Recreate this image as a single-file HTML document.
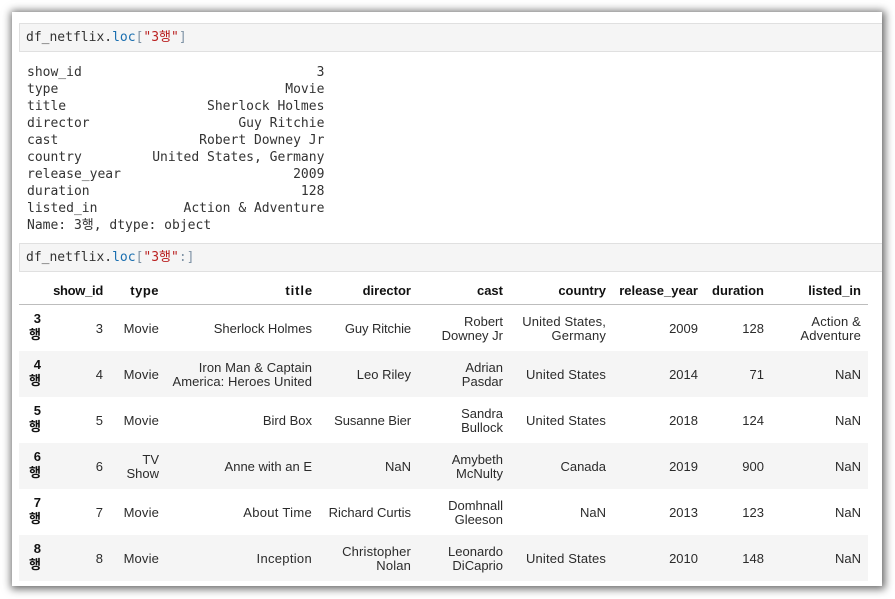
<!DOCTYPE html>
<html><head><meta charset="utf-8">
<style>
html,body{margin:0;padding:0;width:895px;height:599px;overflow:hidden;background:#fff}
#win{position:absolute;left:12px;top:12px;width:870px;height:574px;background:#fff;box-shadow:1px 1px 8px 2px rgba(0,0,0,.6)}
.in{position:absolute;left:19px;top:23px;width:862px;height:27px;background:#f5f5f5;border:1px solid #e0e0e0;border-right:0;box-sizing:content-box}
.code,pre{font-family:"DejaVu Sans Mono","Liberation Mono","Noto Sans CJK KR",monospace;font-size:13px;line-height:17px;margin:0;color:#333;position:absolute;white-space:pre}
.code{left:26px}
.p{color:#1a6fb0}.o{color:#7f93a5}.s{color:#ba2121}
pre{left:27px;top:64px}
table{position:absolute;left:19px;top:277px;width:849px;border-collapse:collapse;table-layout:fixed;font-family:"Liberation Sans","Noto Sans CJK KR",sans-serif;font-size:13px;line-height:14px;color:#2b2b2b}
th,td{padding:2px 7px 0 0;text-align:right;vertical-align:middle;font-weight:normal;overflow:visible;white-space:nowrap}
thead th{font-weight:bold;height:27px;padding:0 7px 0 0;border-bottom:1px solid #bdbdbd;color:#111}
thead th.h3{padding-right:6px}
tbody tr{height:46px}
tbody tr:nth-child(even){background:#f5f5f5}
tbody th{font-weight:bold;text-align:right;color:#111;line-height:16px;padding:0 7px 0 0}
tbody th span{position:relative;top:-1px;display:block}
.a{letter-spacing:.15px}.b{letter-spacing:.3px}.c{letter-spacing:-.1px}.d{letter-spacing:.07px}
.h1{letter-spacing:-.3px}.h2{letter-spacing:.5px}.h3{letter-spacing:.9px}
</style></head><body>
<div id="win"></div>
<div class="in" style="top:23px"></div>
<div class="code" style="top:29px">df_netflix.<span class="p">loc</span><span class="o">[</span><span class="s">"3행"</span><span class="o">]</span></div>
<pre>show_id                              3
type                             Movie
title                  Sherlock Holmes
director                   Guy Ritchie
cast                  Robert Downey Jr
country         United States, Germany
release_year                      2009
duration                           128
listed_in           Action &amp; Adventure
Name: 3행, dtype: object</pre>
<div class="in" style="top:243px"></div>
<div class="code" style="top:249px">df_netflix.<span class="p">loc</span><span class="o">[</span><span class="s">"3행"</span><span class="o">:]</span></div>
<table>
<colgroup><col style="width:29px"><col style="width:62px"><col style="width:56px"><col style="width:153px"><col style="width:99px"><col style="width:92px"><col style="width:103px"><col style="width:92px"><col style="width:66px"><col style="width:97px"></colgroup>
<thead><tr><th></th><th class="h1">show_id</th><th class="h2">type</th><th class="h3">title</th><th>director</th><th>cast</th><th>country</th><th>release_year</th><th>duration</th><th>listed_in</th></tr></thead>
<tbody>
<tr><th><span>3<br>행</span></th><td>3</td><td class="a">Movie</td><td>Sherlock Holmes</td><td class="c">Guy Ritchie</td><td>Robert<br>Downey Jr</td><td class="a">United States,<br>Germany</td><td>2009</td><td>128</td><td class="a">Action &amp;<br>Adventure</td></tr>
<tr><th><span>4<br>행</span></th><td>4</td><td class="a">Movie</td><td class="d">Iron Man &amp; Captain<br>America: Heroes United</td><td>Leo Riley</td><td>Adrian<br>Pasdar</td><td class="a">United States</td><td>2014</td><td>71</td><td>NaN</td></tr>
<tr><th><span>5<br>행</span></th><td>5</td><td class="a">Movie</td><td>Bird Box</td><td class="c">Susanne Bier</td><td>Sandra<br>Bullock</td><td class="a">United States</td><td>2018</td><td>124</td><td>NaN</td></tr>
<tr><th><span>6<br>행</span></th><td>6</td><td>TV<br>Show</td><td>Anne with an E</td><td>NaN</td><td>Amybeth<br>McNulty</td><td>Canada</td><td>2019</td><td>900</td><td>NaN</td></tr>
<tr><th><span>7<br>행</span></th><td>7</td><td class="a">Movie</td><td class="b">About Time</td><td>Richard Curtis</td><td>Domhnall<br>Gleeson</td><td>NaN</td><td>2013</td><td>123</td><td>NaN</td></tr>
<tr><th><span>8<br>행</span></th><td>8</td><td class="a">Movie</td><td class="b">Inception</td><td class="a">Christopher<br>Nolan</td><td>Leonardo<br>DiCaprio</td><td class="a">United States</td><td>2010</td><td>148</td><td>NaN</td></tr>
</tbody></table>
</body></html>
